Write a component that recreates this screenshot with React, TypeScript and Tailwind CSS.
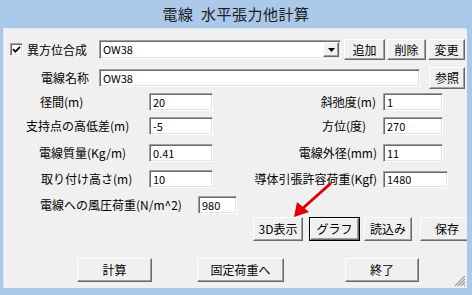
import type { ReactNode } from "react";

const raised =
  "border border-t-white border-l-white border-r-[#696969] border-b-[#696969] shadow-[inset_-1px_-1px_0_#a0a0a0] bg-[#f0f0f0]";
const sunken =
  "border border-t-[#a0a0a0] border-l-[#a0a0a0] border-r-white border-b-white shadow-[inset_1px_1px_0_#696969,inset_-1px_-1px_0_#e3e3e3] bg-white";

function Btn({ className, children, focused }: { className: string; children: ReactNode; focused?: boolean }) {
  if (focused) {
    return (
      <div className={`shrink-0 border border-black flex ${className}`}>
        <div className={`flex-1 flex items-center justify-center ${raised}`}>{children}</div>
      </div>
    );
  }
  return <div className={`shrink-0 flex items-center justify-center ${raised} ${className}`}>{children}</div>;
}

function Field({ className, value }: { className: string; value: string }) {
  return (
    <div className={`shrink-0 flex items-center pl-[3px] text-[11px] ${sunken} ${className}`}>{value}</div>
  );
}

function Label({ className, children }: { className: string; children: ReactNode }) {
  return <span className={`shrink-0 whitespace-nowrap text-[12px] leading-none ${className}`}>{children}</span>;
}

export default function App() {
  return (
    <div className="relative w-[472px] h-[295px] bg-[#aac8e8] flex flex-col font-['Noto_Sans_CJK_JP',sans-serif] text-black overflow-hidden">
      {/* title bar */}
      <div className="h-[29px] flex items-center justify-center text-[15px] text-[#1e1e1e] tracking-[0.5px]">
        電線&nbsp;&nbsp;水平張力他計算
      </div>

      {/* client area */}
      <div className="relative ml-[4px] w-[463px] h-[259px] bg-[#f0f0f0] shadow-[-1px_-1px_0_#dfe8f3] overflow-hidden">
        <div className="flex flex-col">
          {/* row: 異方位合成 */}
          <div className="flex items-center mt-[10px] h-[21px]">
            <div className={`ml-[6px] w-[13px] h-[13px] shrink-0 ${sunken} flex items-center justify-center`}>
              <svg width="9" height="9" viewBox="0 0 9 9">
                <path d="M1 4.2 L3.4 6.6 L8 1.8" fill="none" stroke="#000" strokeWidth="1.8" />
              </svg>
            </div>
            <Label className="ml-[4px] w-[72px]">異方位合成</Label>
            <div className={`w-[242px] h-[19px] shrink-0 flex items-center justify-between ${sunken}`}>
              <span className="pl-[3px] text-[11px]">OW38</span>
              <div className={`w-[16px] h-[15px] mr-[1px] flex items-center justify-center ${raised}`}>
                <svg width="7" height="4" viewBox="0 0 7 4">
                  <path d="M0 0 H7 L3.5 4 Z" fill="#000" />
                </svg>
              </div>
            </div>
            <Btn className="ml-[3px] w-[41px] h-[21px] text-[12px]">追加</Btn>
            <Btn className="ml-[2px] w-[39px] h-[21px] text-[12px]">削除</Btn>
            <Btn className="ml-[2px] w-[37px] h-[21px] text-[12px]">変更</Btn>
          </div>

          {/* row: 電線名称 */}
          <div className="flex items-center mt-[7px] h-[22px]">
            <Label className="ml-[37px] w-[58px]">電線名称</Label>
            <Field className="w-[321px] h-[18px]" value="OW38" />
            <Btn className="ml-[9px] w-[36px] h-[22px] text-[12px]">参照</Btn>
          </div>

          {/* row: 径間 / 斜弛度 */}
          <div className="flex items-center mt-[4px] h-[18px]">
            <Label className="ml-[36px] w-[109px]">径間(m)</Label>
            <Field className="w-[64px] h-[18px]" value="20" />
            <Label className="w-[164px] text-right pr-[1px]">斜弛度(m)</Label>
            <Field className="ml-[6px] w-[60px] h-[18px]" value="1" />
          </div>

          {/* row: 支持点の高低差 / 方位 */}
          <div className="flex items-center mt-[6px] h-[18px]">
            <Label className="ml-[22px] w-[123px]">支持点の高低差(m)</Label>
            <Field className="w-[64px] h-[18px]" value="-5" />
            <Label className="w-[164px] text-right pr-[11px]">方位(度)</Label>
            <Field className="ml-[6px] w-[60px] h-[18px]" value="270" />
          </div>

          {/* row: 電線質量 / 電線外径 */}
          <div className="flex items-center mt-[9px] h-[18px]">
            <Label className="ml-[35px] w-[110px]">電線質量(Kg/m)</Label>
            <Field className="w-[64px] h-[18px]" value="0.41" />
            <Label className="w-[164px] text-right">電線外径(mm)</Label>
            <Field className="ml-[6px] w-[60px] h-[18px]" value="11" />
          </div>

          {/* row: 取り付け高さ / 導体引張許容荷重 */}
          <div className="flex items-center mt-[8px] h-[18px]">
            <Label className="ml-[37px] w-[108px]">取り付け高さ(m)</Label>
            <Field className="w-[64px] h-[18px]" value="10" />
            <Label className="w-[164px] text-right">導体引張許容荷重(Kgf)</Label>
            <Field className="ml-[6px] w-[65px] h-[17px]" value="1480" />
          </div>

          {/* row: 風圧荷重 */}
          <div className="flex items-center mt-[8px] h-[18px]">
            <Label className="ml-[36px] w-[158px]">電線への風圧荷重(N/m^2)</Label>
            <Field className="w-[39px] h-[18px]" value="980" />
          </div>

          {/* row: 3D / graph / load / save */}
          <div className="flex items-center mt-[3px] h-[24px] text-[12px]">
            <Btn className="ml-[249px] w-[50px] h-[24px]">3D表示</Btn>
            <Btn focused className="ml-[6px] w-[51px] h-[24px]">グラフ</Btn>
            <Btn className="ml-[4px] w-[48px] h-[24px]">読込み</Btn>
            <Btn className="ml-[8px] w-[52px] h-[24px] justify-start pl-[14px]">保存</Btn>
          </div>

          {/* row: bottom buttons */}
          <div className="flex items-center mt-[17px] h-[24px] text-[12px]">
            <Btn className="ml-[73px] w-[75px] h-[24px]">計算</Btn>
            <Btn className="ml-[45px] w-[87px] h-[24px]">固定荷重へ</Btn>
            <Btn className="ml-[61px] w-[74px] h-[24px]">終了</Btn>
          </div>
        </div>

        {/* resize grip */}
        <svg className="absolute right-[1px] bottom-[1px]" width="12" height="12" viewBox="0 0 12 12">
          <path d="M11 1 L1 11 M11 4 L4 11 M11 7 L7 11 M11 10 L10 11" stroke="#a0a0a0" strokeWidth="1.2" />
        </svg>
      </div>

      {/* red annotation arrow */}
      <svg className="absolute left-0 top-0 pointer-events-none" width="472" height="295" viewBox="0 0 472 295">
        <line x1="330" y1="184" x2="302" y2="209" stroke="#e00000" strokeWidth="3" strokeLinecap="round" />
        <path d="M294 217 L297 202 L309 212 Z" fill="#e00000" />
      </svg>
    </div>
  );
}
